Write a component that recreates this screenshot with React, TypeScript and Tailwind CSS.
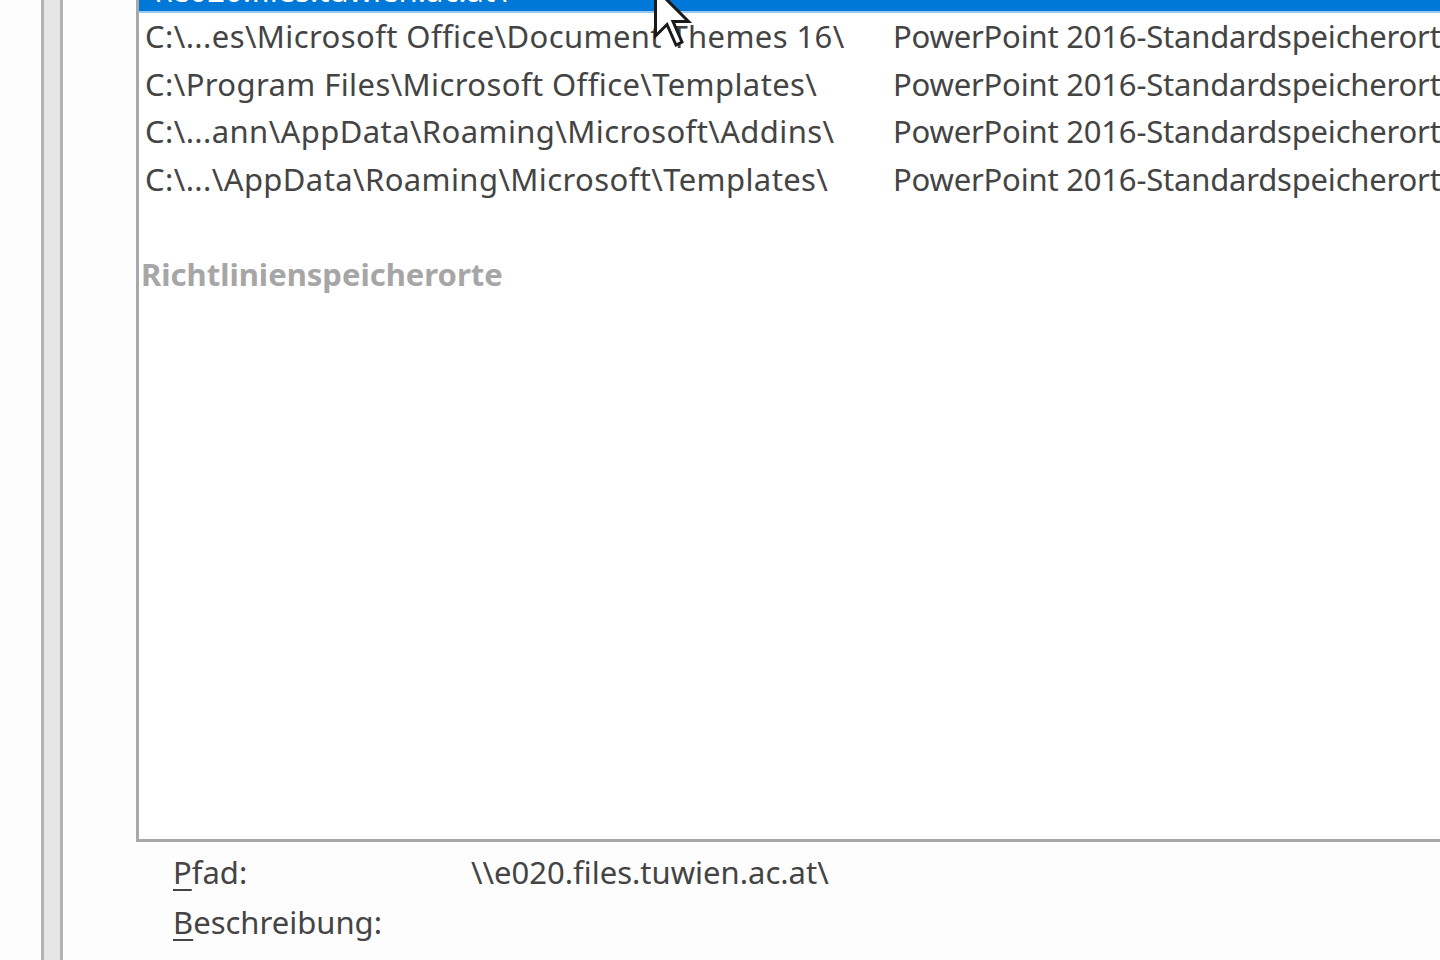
const rows = [
  { path: 'C:\\...es\\Microsoft Office\\Document Themes 16\\', desc: 'PowerPoint 2016-Standardspeicherort' },
  { path: 'C:\\Program Files\\Microsoft Office\\Templates\\', desc: 'PowerPoint 2016-Standardspeicherort' },
  { path: 'C:\\...ann\\AppData\\Roaming\\Microsoft\\Addins\\', desc: 'PowerPoint 2016-Standardspeicherort' },
  { path: 'C:\\...\\AppData\\Roaming\\Microsoft\\Templates\\', desc: 'PowerPoint 2016-Standardspeicherort' },
]

function Cursor() {
  return (
    <svg
      className="absolute left-[654px] top-[-13px]"
      width="40"
      height="62"
      viewBox="0 0 40 62"
    >
      <polygon
        points="1.5,1.5 1.5,49 13,37.5 22,58 28,55 19,34.5 34.5,34.5"
        fill="#ffffff"
        stroke="#1a1a1a"
        strokeWidth="3"
        strokeLinejoin="miter"
      />
    </svg>
  )
}

export default function App() {
  return (
    <div
      className="relative flex h-[960px] w-[1440px] overflow-hidden bg-[#fdfdfd] text-[31px] text-[#444444]"
      style={{ fontFamily: '"Noto Sans", "Open Sans", sans-serif' }}
    >
      {/* left panel edge */}
      <div className="ml-[41px] h-full w-[22px] shrink-0 border-x-[3px] border-[#b3b3b3] bg-[#e6e6e6]" />

      <div className="ml-[73px] flex min-w-0 flex-1 flex-col">
        {/* list box */}
        <div className="-mt-[34px] h-[876px] w-[1400px] shrink-0 border-b-[3px] border-l-[3px] border-[#a8a8a8] bg-white">
          <div className="flex h-[47px] items-center border-b-2 border-[#99c9ef] bg-[#0078d7] pl-[10px] pt-[4px] leading-none text-white">
            <span className="w-[748px] shrink-0 whitespace-nowrap">\\e020.files.tuwien.ac.at\</span>
          </div>
          {rows.map((r, i) => (
            <div key={i} className="flex h-[47.5px] items-center pl-[6px] leading-none">
              <span className="w-[748px] shrink-0 whitespace-nowrap tracking-[0.4px]">{r.path}</span>
              <span className="whitespace-nowrap tracking-[-0.2px]">{r.desc}</span>
            </div>
          ))}
          <div className="h-[47.5px]" />
          <div className="flex h-[47.5px] items-center pl-[2px] font-bold leading-none text-[#a6a6a6]">
            Richtlinienspeicherorte
          </div>
        </div>

        {/* details */}
        <div className="mt-[5px] flex flex-col pl-[37px] leading-none">
          <div className="flex h-[50px] items-center">
            <span className="w-[298px] shrink-0">
              <span className="underline decoration-2 underline-offset-[5px]">P</span>fad:
            </span>
            <span>\\e020.files.tuwien.ac.at\</span>
          </div>
          <div className="flex h-[50px] items-center">
            <span>
              <span className="underline decoration-2 underline-offset-[5px]">B</span>eschreibung:
            </span>
          </div>
        </div>
      </div>

      <Cursor />
    </div>
  )
}
